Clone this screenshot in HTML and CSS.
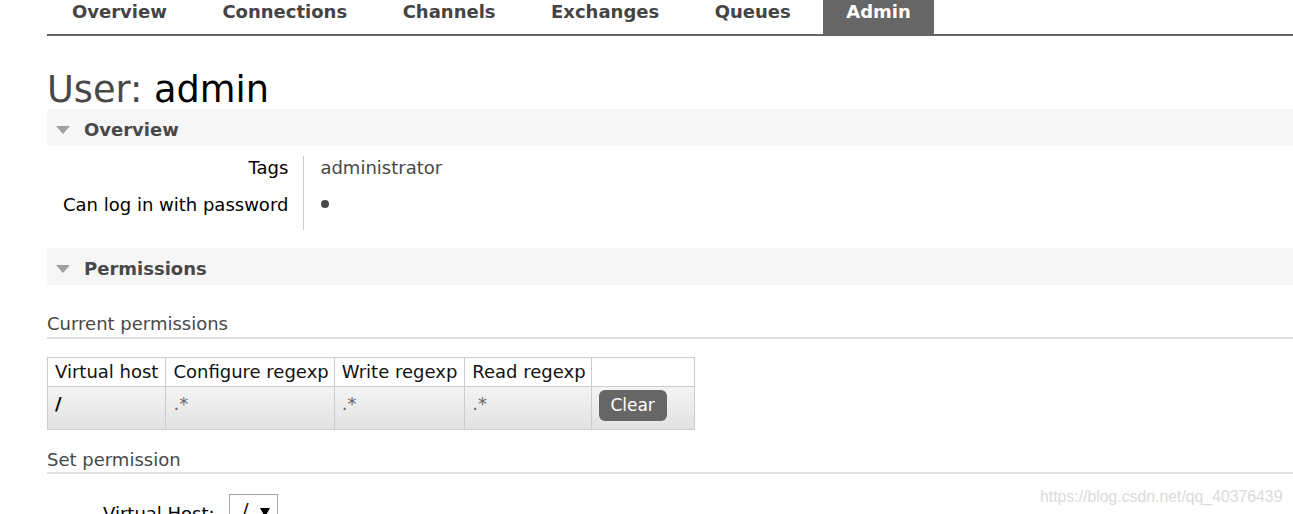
FILE: index.html
```html
<!DOCTYPE html>
<html lang="en">
<head>
<meta charset="utf-8">
<title>User: admin</title>
<link rel="stylesheet" href="styles.css">
</head>
<body>
<div class="page">
  <nav class="tabs">
    <ul class="tab-list">
      <li class="tab">Overview</li>
      <li class="tab">Connections</li>
      <li class="tab">Channels</li>
      <li class="tab">Exchanges</li>
      <li class="tab">Queues</li>
      <li class="tab tab-active">Admin</li>
    </ul>
  </nav>

  <h1 class="title"><span class="title-prefix">User:</span> admin</h1>

  <section class="section">
    <h2 class="section-head"><span class="tri"></span>Overview</h2>
    <table class="facts">
      <tr><th>Tags</th><td>administrator</td></tr>
      <tr><th>Can log in with password</th><td><span class="dot"></span></td></tr>
    </table>
  </section>

  <section class="section">
    <h2 class="section-head"><span class="tri"></span>Permissions</h2>
    <h3 class="sub">Current permissions</h3>
    <table class="list">
      <thead>
        <tr><th class="c-vhost">Virtual host</th><th>Configure regexp</th><th class="c-write">Write regexp</th><th>Read regexp</th><th class="last"></th></tr>
      </thead>
      <tbody>
        <tr>
          <td class="vhost">/</td>
          <td class="rx">.*</td>
          <td class="rx">.*</td>
          <td class="rx">.*</td>
          <td class="btn-cell"><button class="btn">Clear</button></td>
        </tr>
      </tbody>
    </table>
    <h3 class="sub sub-set">Set permission</h3>
    <div class="form-row">
      <span class="form-label">Virtual Host:</span>
      <span class="select"><span class="select-val">/</span><span class="caret"></span></span>
    </div>
  </section>
</div>
<div class="watermark">https://blog.csdn.net/qq_40376439</div>
</body>
</html>
```

FILE: styles.css
```css
html, body {
  margin: 0;
  padding: 0;
  overflow: hidden;
  background: #fff;
}
body {
  font-family: "DejaVu Sans", Verdana, sans-serif;
  font-size: 18px;
  color: #484848;
  width: 1293px;
  height: 514px;
  position: relative;
}
.page {
  padding-left: 47px;
}

/* tabs */
.tabs {
  border-bottom: 2px solid #666;
}
.tab-list {
  list-style: none;
  margin: 0;
  padding: 0 0 0 2px;
  display: flex;
  gap: 9.5px;
}
.tab {
  font-weight: bold;
  line-height: 20px;
  padding: 2px 23px 12px;
  color: #444;
}
.tab-active {
  background: #666;
  color: #fff;
}

/* title */
.title {
  margin: 34px 0 0;
  font-size: 36.7px;
  font-weight: normal;
  line-height: 39px;
  color: #000;
}
.title-prefix {
  color: #484848;
}

/* section bands */
.section-head {
  margin: 0;
  height: 37px;
  box-sizing: border-box;
  padding: 4px 0 0 9px;
  background: #f6f6f6;
  display: flex;
  align-items: center;
  font-size: 18px;
  font-weight: bold;
  line-height: 33px;
  color: #484848;
}
.tri {
  width: 0;
  height: 0;
  border-left: 7.5px solid transparent;
  border-right: 7.5px solid transparent;
  border-top: 8px solid #a0a0a0;
  margin-right: 14px;
}

/* facts */
.facts {
  border-collapse: collapse;
  margin: 10px 0 18px;
}
.facts th {
  text-align: right;
  font-weight: normal;
  color: #000;
  line-height: 21px;
  padding: 1px 15px 15px 16px;
}
.facts td {
  border-left: 1px solid #ccc;
  line-height: 21px;
  padding: 1px 16px 15px 16px;
  color: #484848;
}
.dot {
  display: inline-block;
  width: 8px;
  height: 8px;
  border-radius: 50%;
  background: #484848;
  margin-left: 1px;
  vertical-align: 3px;
}

/* sub headings */
.sub {
  margin: 28px 0 0;
  font-size: 18px;
  font-weight: normal;
  line-height: 21px;
  padding-bottom: 3px;
  border-bottom: 2px solid #e0e0e0;
  color: #484848;
}
.sub-set {
  margin-top: 19px;
  padding-bottom: 2px;
}

/* list table */
.list {
  border-collapse: collapse;
  margin-top: 18px;
}
.list th,
.list td {
  border: 1px solid #ccc;
  line-height: 21px;
  text-align: left;
}
.list th {
  font-weight: normal;
  color: #111;
  padding: 3px 5px 4px 7px;
  background: #fff;
}
.list th.c-vhost,
.list th.c-write {
  padding-right: 7px;
}
.list th.last {
  padding: 0;
}
.list tbody tr {
  background: linear-gradient(#f4f4f4, #e2e2e2);
}
.list td {
  vertical-align: top;
  padding: 6px 5px 0 7px;
}
.list td.vhost {
  font-weight: bold;
  color: #000;
}
.list td.rx {
  color: #666;
}
.list td.btn-cell {
  padding: 3px 27px 8px 7px;
}
.btn {
  display: block;
  width: 68px;
  height: 31px;
  padding: 0;
  border: none;
  border-radius: 6px;
  background: #666;
  color: #fff;
  font-family: "DejaVu Sans", Verdana, sans-serif;
  font-size: 17px;
  line-height: 31px;
}

/* form */
.form-row {
  display: flex;
  align-items: flex-start;
  gap: 14px;
  margin-top: 20px;
  padding-left: 56px;
}
.form-label {
  color: #000;
  line-height: 21px;
  margin-top: 9px;
}
.select {
  display: inline-flex;
  align-items: center;
  gap: 11px;
  height: 30px;
  box-sizing: border-box;
  width: 49px;
  padding: 0 0 0 13px;
  border: 1px solid #a6a6a6;
  color: #000;
  line-height: 21px;
}
.caret {
  width: 0;
  height: 0;
  border-left: 5px solid transparent;
  border-right: 5px solid transparent;
  border-top: 9px solid #000;
  margin-top: 6px;
}

.watermark {
  position: absolute;
  left: 1040px;
  top: 488px;
  font-family: "Liberation Sans", Arial, sans-serif;
  font-size: 15.8px;
  line-height: 18px;
  color: #dadada;
  white-space: nowrap;
}
```
